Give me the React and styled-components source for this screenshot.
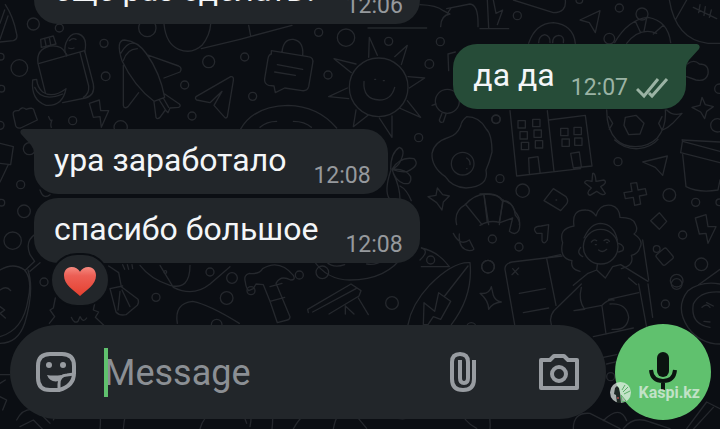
import { useState } from "react";
import styled, { createGlobalStyle } from "styled-components";

const colors = {
  wallpaper: "#0b0e13",
  doodle: "#25282d",
  incoming: "#22262a",
  outgoing: "#264c38",
  text: "#f4f6f8",
  time: "#96999d",
  timeOut: "#9bb3a4",
  icon: "#989ca1",
  green: "#60c16e",
  dark: "#0b1410",
};

const GlobalStyle = createGlobalStyle`
  * {
    box-sizing: border-box;
  }

  body {
    margin: 0;
    background: ${colors.wallpaper};
    font-family: Roboto, "Noto Sans", sans-serif;
  }
`;

const Screen = styled.main`
  position: relative;
  display: flex;
  flex-direction: column;
  height: 100vh;
  overflow: hidden;
  background: ${colors.wallpaper};
`;

const WallpaperSvg = styled.svg`
  position: absolute;
  inset: 0;
  width: 100%;
  height: 100%;
  fill: none;
  stroke: ${colors.doodle};
  stroke-width: 4;
  stroke-linecap: round;
  stroke-linejoin: round;
`;

const Messages = styled.section`
  position: relative;
  flex: 1;
  min-height: 0;
  display: flex;
  flex-direction: column;
  justify-content: flex-end;
  padding: 0 34px 61px;
`;

const Row = styled.div`
  display: flex;
  flex-shrink: 0;
  justify-content: ${({ $out }) => ($out ? "flex-end" : "flex-start")};
  margin-top: ${({ $grouped }) => ($grouped ? "4px" : "20px")};
`;

const Bubble = styled.div`
  position: relative;
  display: flex;
  align-items: flex-end;
  gap: ${({ $out }) => ($out ? "16px" : "27px")};
  height: 65px;
  padding: 0 17px 0 20px;
  border-radius: 24px;
  border-top-left-radius: ${({ $out, $tail }) =>
    $tail && !$out ? "0" : "24px"};
  border-top-right-radius: ${({ $out, $tail }) =>
    $tail && $out ? "0" : "24px"};
  background: ${({ $out }) => ($out ? colors.outgoing : colors.incoming)};
`;

const Text = styled.p`
  margin: 0;
  padding-bottom: 4px;
  align-self: center;
  font-size: 32px;
  line-height: 40px;
  white-space: nowrap;
  color: ${colors.text};
`;

const Meta = styled.div`
  display: flex;
  align-items: center;
  gap: 8px;
  padding-bottom: ${({ $out }) => ($out ? "7px" : "4px")};
  font-size: 23px;
  line-height: 28px;
  color: ${({ $out }) => ($out ? colors.timeOut : colors.time)};
`;

const TailSvg = styled.svg`
  position: absolute;
  top: 0;
  ${({ $out }) => ($out ? "left: 100%;" : "right: 100%;")}
  margin: 0 -1px;
  fill: ${({ $out }) => ($out ? colors.outgoing : colors.incoming)};
`;

const Reaction = styled.button`
  position: absolute;
  left: 16px;
  top: 55px;
  display: flex;
  align-items: center;
  justify-content: center;
  width: 60px;
  height: 54px;
  padding: 4px 0 0;
  border: 2px solid ${colors.wallpaper};
  border-radius: 27px;
  background: ${colors.incoming};
`;

const Composer = styled.form`
  position: relative;
  display: flex;
  align-items: center;
  gap: 9px;
  padding: 0 9px 9px 10px;
`;

const Field = styled.div`
  flex: 1;
  min-width: 0;
  display: flex;
  align-items: center;
  height: 94px;
  padding: 0 27px 0 26px;
  border-radius: 47px;
  background: ${colors.incoming};
`;

const IconButton = styled.button`
  display: flex;
  flex-shrink: 0;
  padding: 0;
  border: 0;
  background: none;
  color: ${colors.icon};
`;

const InputWrap = styled.div`
  position: relative;
  flex: 1;
  min-width: 0;
  display: flex;
  align-items: center;
  margin-left: 28px;
`;

const Caret = styled.span`
  position: absolute;
  left: 0;
  width: 4px;
  height: 49px;
  background: ${colors.green};
`;

const Input = styled.input`
  width: 100%;
  height: 49px;
  padding: 2px 0 0;
  border: 0;
  outline: 0;
  background: none;
  font-family: inherit;
  font-size: 36px;
  color: ${colors.text};
  caret-color: ${colors.green};

  &::placeholder {
    color: #8b8f94;
    opacity: 1;
  }
`;

const Attachments = styled.div`
  display: flex;
  align-items: center;
  gap: 63px;
`;

const MicButton = styled.button`
  display: flex;
  flex-shrink: 0;
  align-items: center;
  justify-content: center;
  width: 96px;
  height: 96px;
  padding: 0;
  border: 0;
  border-radius: 50%;
  background: ${colors.green};
  color: ${colors.dark};
`;

const Watermark = styled.div`
  position: absolute;
  right: 20px;
  bottom: 26px;
  display: flex;
  align-items: center;
  gap: 7px;
  font-size: 16px;
  line-height: 20px;
  font-weight: 700;
  color: rgba(232, 240, 234, 0.72);
  pointer-events: none;
`;

const Dots = ({ items }) =>
  items.map(([cx, cy, r]) => (
    <circle key={`${cx}-${cy}`} cx={cx} cy={cy} r={r} />
  ));

const Windows = ({ items }) =>
  items.map(([x, y]) => (
    <rect key={`${x}-${y}`} x={x} y={y} width="22" height="22" />
  ));

// Line doodles, drawn at three times their size
const Wallpaper = () => (
  <WallpaperSvg
    viewBox="0 0 2160 1287"
    preserveAspectRatio="xMidYMax slice"
    aria-hidden="true"
  >
    <g>
      <path d="M0 126l40-4q14-4 10-20Q40 50 16 14M0 118l24-70M0 70l14-40" />
      <path d="M122 118l38-10 8 24-44 10zM134 116l4 20M148 112l4 22" />
      <path d="M136 278l-22-88q-6-42 36-52 34-4 46 20l6 8M118 190l136-38 26 100q6 34-24 42l-68 14M240 158l26 100q2 24-16 34" />
      <path d="M200 168q-10-18-2-40 14-32 38-26 28 10 18 54M208 122q10-10 20-4M206 144q8 4 16 0" />
      <path d="M98 240q-6 60 40 76 50 4 60-50-40 30-70 10-16-14-18-38zM104 262q20 46 84 20" />
      <path d="M40 346q-4-16 16-14 10-14 22-4 24-8 24 4l10 28-50 24q-16 2-16-12zM146 350q6 16 10 10-6 14-2 22" />
      <path d="M268 310l30-10 4 32h24l-22 50-4-32-20 2z" />
      <path d="M366 182q-20-62 8-62 40 4 66 42 40 56 54 130l-32 12q-60-46-96-122zM362 160q20-34 40-30M370 182q10-34 42-36M440 164l96 34q12 6 4 18l-48 18M370 196v120q2 12 14 4l32-42M462 306l6 46q4 8 12 0l16-22 8 8 6-14 26-2q8-4 2-10l-44-30M478 300l20 32M490 294l16 28" />
      <path d="M492 72q6 60 44 76 40 16 70-12 24-30 26-64M604 146l116-28" />
      <path d="M588 290l104-60q10-2 8 12l-18 108q-4 8-10 0l-30-34 24-42-36 34-40-8q-6-4-2-10z" />
      <Dots items={[[100, 72, 18], [178, 84, 12], [58, 204, 25], [312, 130, 12], [317, 229, 13], [442, 84, 26], [626, 185, 18], [554, 255, 12], [576, 348, 12], [218, 362, 12], [2, 170, 10], [4, 266, 10], [0, 376, 12], [362, 382, 20]]} />
    </g>
    <g transform="translate(720 0)">
      <path d="M0 118l156-42M26 76l6 32M384 84h176M540 14q50 2 70 18 10 6 20 10-28 4-28 38M620 26l70-14q26 2 24 68M622 40l10-14" />
      <path d="M94 152l110 18q18 2 14 20l-12 70q-4 14-20 12l-52-8-28 14-4-20-16-2q-14-4-12-20l10-60q2-12 10-14zM126 156q4-40 34-38 32 6 28 48M112 194l76 14M104 216l62 10" />
      <circle cx="416" cy="262" r="88" />
      <path d="M372 244q-4 54 46 56 36 0 46-38M404 238h3M430 242h3" />
      <path d="M386 172l2-60 24 54M464 170l38-34-18 58M504 230l50 4-46 30M502 302l40 50-64-28M456 348v64l-38-58M384 346l-44 34 8-50M322 264l-56 26 60 6M334 218l-52-42 66 16" />
      <path d="M0 390q40-72 144-74 90 2 146 68M60 382q20-18 50-18M160 364q34 0 54 18" />
      <circle cx="622" cy="304" r="36" />
      <path d="M606 340l-8 20q2 10 12 6l8-24M588 312l-12 4M626 212l-2-50 22-6" />
      <Dots items={[[236, 97, 12], [318, 113, 26], [446, 124, 12], [601, 125, 12], [568, 192, 13], [264, 225, 12], [38, 289, 12], [14, 171, 12]]} />
    </g>
    <g transform="translate(1440 0)">
      <path d="M0 86h86M22 0l4 84M40 0l8 40 20-10-16 44M100 0l120 38q40 0 36-38M300 60l60-28-14 66-18-30z" />
      <path d="M146 130q20-60 74-62 60 6 66 62M176 128q0-20 18-24 18 4 16 24M218 128q0-20 18-22 18 2 14 22" />
      <path d="M404 128q40-70 100-76 60 10 68 76M440 130q40-50 90-30M466 64l16 34M500 54l-8 40M550 76l-30 26M568 0q20 120 116 130h36M586 60l34-60M640 22l70 34M660 14l-4 24M676 20l-4 26M694 30l-6 22" />
      <circle cx="486" cy="42" r="18" />
      <circle cx="388" cy="116" r="16" />
      <path d="M622 192q20-16 36 0 30 0 26 30-6 24-36 18l-28-10M636 322l24-6 6-24 10 22 24 6-20 14-6 22-12-20z" />
      <path d="M380 330q0 60 30 90 20 20 56 20 40 0 66-26M556 330q4 50-24 84M436 352l32-6 24 24-12 32-34 2-14-28zM386 350l12 20-10 18M546 350l-10 20 10 20M560 330q20 20 46 10l-28 30q-14 14-30 20M606 420l114 6" />
      <Dots items={[[112, 47, 12], [418, 24, 12], [48, 358, 13], [712, 376, 20], [718, 266, 14], [298, 0, 10]]} />
    </g>
    <g transform="translate(1020 240)">
      <path d="M380 110q38 0 58 36 18 16 18 70-8 32-18 54 10 50-60 54-42-2-62-34-42-28-40-70 6-34 50-48 24-6 36-34 2-16 18-28z" />
      <circle cx="368" cy="251" r="34" />
      <path d="M380 234q12 8 10 20M380 266h1" />
      <path d="M152 268q0-50 26-66 20 6 4 40-8 18-26 26 24-40 66-32 20 20-20 38-20 4-46-6 40-4 56 22 4 26-22 20-24-8-34-42M152 272q-20 60-4 84M160 280q20 40 20 80M180 318q20 10 34 44" />
      <path d="M264 350l24-4 4-22 16 20 20 4-18 18-4 24-16-22z" />
      <path d="M510 92l20 196 192-22M622 92l20 182M626 120l110-14 20 152-56 6M568 280l-2-46 28-4 6 46M700 264l-8-44 26-4 6 44" />
      <Windows items={[[534, 122], [578, 118], [540, 155], [582, 150], [544, 187], [586, 182], [662, 145], [702, 142], [666, 177], [704, 174]]} />
      <Dots items={[[468, 118, 12], [236, 173, 12], [480, 296, 12], [548, 332, 20]]} />
      <path d="M350 434q-10-40 26-60 26-30 60-32 40 0 50 20 30 4 40 34 16 18 12 38M376 372l50 62M432 344l14 90M488 362l-10 72" />
    </g>
    <g transform="translate(1440 420)">
      <path d="M404 0q30 28 70 26 40-4 60-28M488 66l74-18-14 58-22-24zM608 4l112 30M608 0l-6 38 118 30M608 44l10 96q40 20 96 10l6-30" />
      <path d="M0 162h20q30-4 50 20 30 0 36 44 20 20 10 46-10 16-28 2l10-40-38 14q-30-10-60 8M12 164l10 84M70 180l-12 64" />
      <path d="M220 146l38 24q10 14 0 24l-16 18-50-30zM228 180h2" />
      <path d="M338 100q8-2 10 24l24-4q12 8-10 20l14 20q-6 10-26-6l-20 12q-14-6 4-22l-20-16q0-10 22-4zM452 130l18-2 4 22 22-4 4 18-22 4 4 24-18 4-4-24-24 4-4-18 24-4z" />
      <path d="M538 218l22 26-22 24-26-26zM646 234l32-10 6 36h24l-24 50-6-30-20 2zM184 258l22-4-4 46q-10 16-16 2v-22h-16q-18-20 14-22" />
      <circle cx="362" cy="320" r="52" />
      <path d="M312 294q20-44 50-44 40 2 50 50M308 350q-20-10-6-28M416 310q20 8 12 22l-12 4M334 306q8-10 16-4M372 302q10-8 16 2M346 314h3M380 308h3M356 330q12 10 24-2" />
      <path d="M300 394q-30-6-24-32-40-8-28-54-14-42 34-50-8-50 36-48 18 0 30 18 10-38 46-32 24 6 26 36 40 0 46 20 10 20-4 30 30 20 18 40-6 20-26 24 10 30-30 40" />
      <path d="M352 374l-2 16 26 24 22-34M350 390l-26 10-44 36M398 380l24-6 82 50M204 352l38-8M488 300l18 120M446 414l24 20" />
      <rect x="534" y="330" width="40" height="40" rx="6" transform="rotate(-40 554 350)" />
      <circle cx="530" cy="327" r="10" />
      <Dots items={[[414, 65, 12], [568, 165, 19], [647, 187, 12], [37, 297, 12], [117, 321, 12], [24, 380, 19], [608, 285, 12], [664, 373, 19], [590, 422, 19], [718, 187, 10]]} />
      <path d="M656 434l64-46" />
    </g>
    <g transform="translate(0 420)">
      <path d="M0 10l40 10-8 54-32-4M24 76l-24 50M120 150q10 30 30 14" />
      <Dots items={[[88, 26, 18], [62, 134, 12], [72, 214, 19], [38, 302, 26], [4, 188, 10], [132, 426, 12]]} />
      <path d="M104 284q-30 20-14 60l14 20-30 28M120 368l-30 26" />
    </g>
    <g transform="translate(0 720)">
      <path d="M0 90q40-24 74 0 24 30 10 90-14 90-84 110M84 90q20 60-10 160-20 60-74 60M0 150q20-14 32 2M0 200l14 10-14 10 16 14" />
      <path d="M166 174l-6 30-10 6 14 20-16 20M284 190l-4 20 16 6-10 16 30 28M214 232q8 20 20 12l6-14q10 20 20 4" />
      <path d="M326 78l30 20 8 42 50 38q4 10-2 18l-34 28q-20 4-30-8l-18-70 38-8M366 150l24 50M360 154l-6 56M368 74l6 14M382 74l4 14M396 74l2 12M420 76q30 40 90 60 60 16 60-60M480 76l40 66q60 30 110-10l60-52M532 250q-10-60 46-66 50 10 140 66" />
      <Dots items={[[468, 172, 12], [680, 174, 19], [630, 96, 12], [696, 114, 16], [650, 254, 16], [496, 96, 4]]} />
      <path d="M0 404h30M0 430l16-10M0 470l20 10-12 30M50 540q20-40 60-30l40 40M60 560l40-20 30 30" />
    </g>
    <g transform="translate(720 700)">
      <path d="M16 146q-6-22 12-26 30 4 40-14 50-30 92 20 8 14-8 14-30-16-44 10l42 100q0 8-8 10l-30 8-22-64-20-50-22-2-8 14-14 6q-8-8-10-26zM90 160l36-10M90 204l44-12" />
      <path d="M220 100q40 60 110 60 120 0 170-90M260 106q20 20 54 8M380 112q30 4 44-10M540 100q30-28 4-36 50 10 84 56h-84" transform="translate(0 -20)" />
      <path d="M205 274l-2-10 130-76 30 20-6 16-90 54M218 272l130-70M355 230l30 50M316 254l26 24M316 254v24" transform="translate(0 -36)" />
      <Dots items={[[178, 125, 12], [247, 117, 19], [33, 172, 12]]} />
    </g>
    <g transform="translate(1020 690)">
      <path d="M204 284q10-60 66-120 70-70 120-66 10 100-56 186M384 108l-70 90M250 284l2-66 32 26 12-56 36 26-30 54-22-8-16 24zM340 10q20 40 48 20l10 20q10 12-10 12-34-4-30-50" />
      <path d="M420 190q28 4 34-20l6 26q6 18 24 20-26 2-38 22 0-26-26-48zM524 284l-28-160q-6-22 20-28l150-18M620 86l28 140M518 116l16 18M536 114l-20 20M538 190l78-14M550 248l76-14" />
      <Dots items={[[272, 90, 12], [444, 110, 19], [156, 219, 19], [394, 292, 14]]} />
    </g>
    <g transform="translate(1440 852)">
      <path d="M214 122q-10-30 20-54l70-68M304 10q-10 40 10 66l-32 4 84-16q20-20 36-16M386 46l90-20M366 66l12 84M390 60q50-4 56 40-4 40-50 36M476 0l24 130M340 158l120-26M504 0l14 100M370 220l40-8M380 240l34-8" />
      <path d="M720 180q-60 0-96-50-40-60 0-110 40-30 96-20M640 60q20-40 80-36M640 60q-10 60 50 70M666 70q14-14 24 0M672 112l18 2M680 56l20 10" />
      <path d="M280 434q0-50 50-46l90 46M370 410q50-50 70 0M430 434q30-40 80-20l60 20M620 434l60-80 40 20M636 440l64-70" />
      <Dots items={[[556, 60, 12], [392, 278, 12], [590, 0, 16]]} />
    </g>
    <path d="M160 1260q20-50 70-30M300 1287q4-40-4-64M370 1287q4-50 16-60M440 1225q40 40 100 0M600 1287q10-40 50-60M740 1270q-20-50 0-50 20 10 10 60M816 1225q4 30 0 62M880 1287q30-60 90-62M1000 1287q10-60 50-62l50 60M1150 1225q40 50 100 20l10-20M1380 1225q10 40 50 60M1470 1287q4-50-20-62" />
  </WallpaperSvg>
);

const Tail = ({ out }) =>
  out ? (
    <TailSvg $out width="15" height="24" viewBox="0 0 15 24">
      <path d="M0 0h12q4 1 2 5L4 16q-3 4-3 8H0z" />
    </TailSvg>
  ) : (
    <TailSvg width="15" height="24" viewBox="0 0 15 24">
      <path d="M15 0H3Q-1 1 1 5l10 11q3 4 3 8h1z" />
    </TailSvg>
  );

const Ticks = () => (
  <svg width="33" height="22" viewBox="0 0 33 22" fill="none" stroke="currentColor" strokeWidth="3">
    <path d="M1 12l7 7L22 2M13 16l3 3L31 2" />
  </svg>
);

const Heart = () => (
  <svg width="34" height="32" viewBox="0 0 36 34">
    <defs>
      <linearGradient id="heart" x1="0" y1="0" x2="0" y2="1">
        <stop offset="0" stopColor="#f58a80" />
        <stop offset="0.3" stopColor="#ec5f55" />
        <stop offset="1" stopColor="#e5402f" />
      </linearGradient>
    </defs>
    <path
      fill="url(#heart)"
      d="M18 6C16 3 13 1 9 1 4 1 1 5 1 10c0 10 10 15 17 22 7-7 17-12 17-22 0-5-3-9-8-9-4 0-7 2-9 5z"
    />
  </svg>
);

const StickerIcon = () => (
  <svg width="40" height="40" viewBox="0 0 40 40" fill="none" stroke="currentColor" strokeWidth="4">
    <path d="M38 22V14Q38 2 26 2H14Q2 2 2 14v12q0 12 12 12h9Q38 34 38 21" />
    <path d="M23 38v-6q0-9 8-9l7-1" strokeWidth="3" />
    <path d="M11 23q6 1 15 0l-3 6q-9 2-12-6z" fill="currentColor" stroke="none" />
    <circle cx="13" cy="13" r="3" fill="currentColor" stroke="none" />
    <circle cx="27" cy="13" r="3" fill="currentColor" stroke="none" />
  </svg>
);

const ClipIcon = () => (
  <svg width="26" height="40" viewBox="0 0 26 40" fill="none" stroke="currentColor" strokeWidth="4">
    <path d="M24 8v19q0 11-11 11T2 27V10q0-8 8-8t8 8v16q0 5-4 5t-4-5V8" />
  </svg>
);

const CameraIcon = () => (
  <svg width="40" height="36" viewBox="0 0 40 36" fill="none" stroke="currentColor" strokeWidth="4" strokeLinejoin="round">
    <path d="M2 6h9l4-4h10l4 4h9v28H2z" />
    <circle cx="20" cy="20" r="7" />
  </svg>
);

const MicIcon = () => (
  <svg width="28" height="40" viewBox="0 0 28 40" fill="none" stroke="currentColor" strokeWidth="4">
    <rect x="8" y="0" width="12" height="25" rx="6" fill="currentColor" stroke="none" />
    <path d="M2 18q1 11 12 11t12-11M14 29v9" />
  </svg>
);

const Emblem = () => (
  <svg width="21" height="21" viewBox="0 0 42 42">
    <circle cx="21" cy="21" r="21" fill="currentColor" />
    <path d="M14 8l4 4 2 10 2 20h-8l-2-16-4-2 2-12z" fill="#1f2925" />
    <path d="M24 40l-2-14 10 12zM30 6l-6 10M36 10L26 20M40 18l-12 6" stroke="#5cad68" strokeWidth="2" fill="none" />
    <circle cx="16" cy="32" r="2" fill="#b14848" />
  </svg>
);

const messages = [
  { id: 1, text: "еще раз сделать?", time: "12:06" },
  { id: 2, text: "да да", time: "12:07", out: true, tail: true },
  { id: 3, text: "ура заработало", time: "12:08", tail: true },
  { id: 4, text: "спасибо большое", time: "12:08", grouped: true, liked: true },
];

const Message = ({ text, time, out, tail, grouped, liked }) => (
  <Row $out={out} $grouped={grouped}>
    <Bubble $out={out} $tail={tail}>
      {tail && <Tail out={out} />}
      <Text>{text}</Text>
      <Meta $out={out}>
        <time>{time}</time>
        {out && <Ticks />}
      </Meta>
      {liked && (
        <Reaction type="button" aria-label="Heart">
          <Heart />
        </Reaction>
      )}
    </Bubble>
  </Row>
);

const App = () => {
  const [draft, setDraft] = useState("");

  return (
    <>
      <GlobalStyle />
      <Screen>
        <Wallpaper />
        <Messages>
          {messages.map((message) => (
            <Message key={message.id} {...message} />
          ))}
        </Messages>

        <Composer onSubmit={(e) => e.preventDefault()}>
          <Field>
            <IconButton type="button" aria-label="Stickers">
              <StickerIcon />
            </IconButton>
            <InputWrap>
              <Input
                aria-label="Message"
                placeholder="Message"
                value={draft}
                onChange={(e) => setDraft(e.target.value)}
              />
              {!draft && <Caret />}
            </InputWrap>
            <Attachments>
              <IconButton type="button" aria-label="Attach">
                <ClipIcon />
              </IconButton>
              <IconButton type="button" aria-label="Camera">
                <CameraIcon />
              </IconButton>
            </Attachments>
          </Field>
          <MicButton type="button" aria-label="Record">
            <MicIcon />
          </MicButton>
        </Composer>

        <Watermark>
          <Emblem />
          <span>Kaspi.kz</span>
        </Watermark>
      </Screen>
    </>
  );
};

export default App;
